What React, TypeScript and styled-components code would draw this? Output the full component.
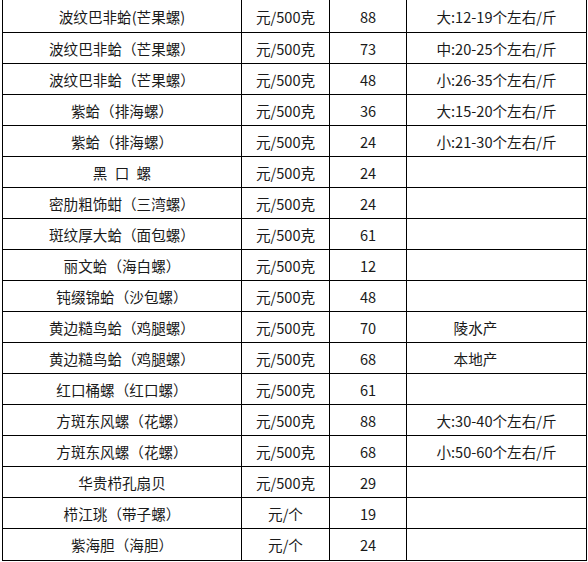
import React from "react";
import styled, { createGlobalStyle } from "styled-components";

const Global = createGlobalStyle`
  html, body { margin: 0; padding: 0; background: #fff; }
  body { font-family: "Noto Sans CJK SC", "Noto Sans", sans-serif; }
`;

const Sheet = styled.div`
  margin-left: 2px;
  width: 585px;
  box-sizing: border-box;
  border-left: 1px solid #000;
  display: flex;
  flex-direction: column;
`;

const Row = styled.div`
  display: grid;
  grid-template-columns: 239px 88px 77px 180px;
  height: 31px;
  box-sizing: border-box;
  border-bottom: 1px solid #000;
  &:first-child { height: 33px; }
  &:last-child { height: 32px; }
`;

const Cell = styled.div<{ $shift?: number }>`
  box-sizing: border-box;
  border-right: 1px solid #000;
  display: flex;
  align-items: center;
  justify-content: center;
  padding-top: 2px;
  padding-right: ${(p) => p.$shift ?? 0}px;
  font-size: 14.6px;
  line-height: 1;
  color: #1a1a1a;
  white-space: pre;
`;

type R = [string, string, string, string, number?];

const rows: R[] = [
  ["波纹巴非蛤(芒果螺)", "元/500克", "88", "大:12-19个左右/斤"],
  ["波纹巴非蛤（芒果螺）", "元/500克", "73", "中:20-25个左右/斤"],
  ["波纹巴非蛤（芒果螺）", "元/500克", "48", "小:26-35个左右/斤"],
  ["紫蛤（排海螺）", "元/500克", "36", "大:15-20个左右/斤"],
  ["紫蛤（排海螺）", "元/500克", "24", "小:21-30个左右/斤"],
  ["黑\u2002口\u2002螺", "元/500克", "24", ""],
  ["密肋粗饰蚶（三湾螺）", "元/500克", "24", ""],
  ["斑纹厚大蛤（面包螺）", "元/500克", "61", ""],
  ["丽文蛤（海白螺）", "元/500克", "12", ""],
  ["钝缀锦蛤（沙包螺）", "元/500克", "48", ""],
  ["黄边糙鸟蛤（鸡腿螺）", "元/500克", "70", "陵水产", 42],
  ["黄边糙鸟蛤（鸡腿螺）", "元/500克", "68", "本地产", 42],
  ["红口桶螺（红口螺）", "元/500克", "61", ""],
  ["方斑东风螺（花螺）", "元/500克", "88", "大:30-40个左右/斤"],
  ["方斑东风螺（花螺）", "元/500克", "68", "小:50-60个左右/斤"],
  ["华贵栉孔扇贝", "元/500克", "29", ""],
  ["栉江珧（带子螺）", "元/个", "19", ""],
  ["紫海胆（海胆）", "元/个", "24", ""],
];

export default function App() {
  return (
    <>
      <Global />
      <Sheet>
        {rows.map((r, i) => (
          <Row key={i}>
            <Cell>{r[0]}</Cell>
            <Cell>{r[1]}</Cell>
            <Cell>{r[2]}</Cell>
            <Cell $shift={r[4]}>{r[3]}</Cell>
          </Row>
        ))}
      </Sheet>
    </>
  );
}
